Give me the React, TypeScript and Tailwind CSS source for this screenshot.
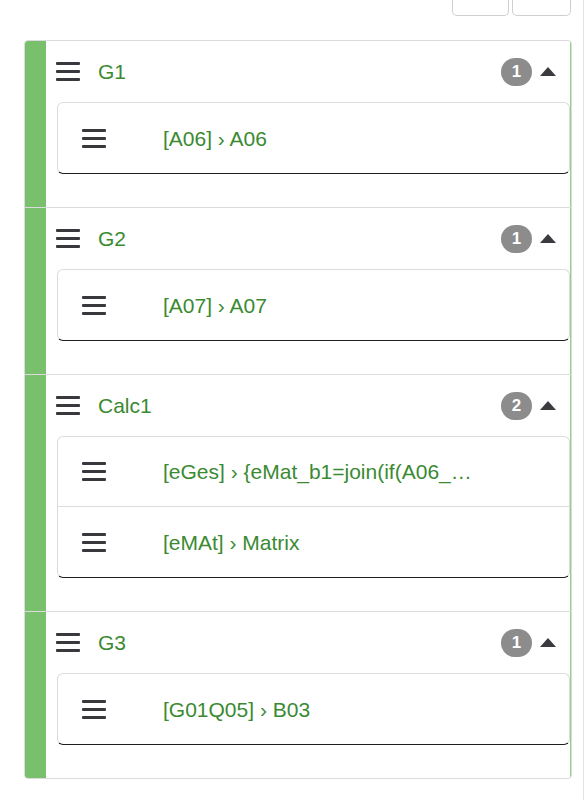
import React from "react";

const Burger = () => (
  <div className="flex flex-col gap-[5px] w-[24px] shrink-0">
    <div className="h-[3px] w-[24px] bg-[#38383d] rounded-[1px]" />
    <div className="h-[3px] w-[24px] bg-[#38383d] rounded-[1px]" />
    <div className="h-[3px] w-[24px] bg-[#38383d] rounded-[1px]" />
  </div>
);

const Caret = () => (
  <svg width="16" height="9" viewBox="0 0 16 9" className="shrink-0">
    <polygon points="0,9 8,0 16,9" fill="#3a3a3f" />
  </svg>
);

type Group = { name: string; items: string[] };

const groups: Group[] = [
  { name: "G1", items: ["[A06] › A06"] },
  { name: "G2", items: ["[A07] › A07"] },
  { name: "Calc1", items: ["[eGes] › {eMat_b1=join(if(A06_…", "[eMAt] › Matrix"] },
  { name: "G3", items: ["[G01Q05] › B03"] },
];

export default function App() {
  return (
    <div
      className="w-[584px] min-h-[800px] bg-white border-r border-[#e4e4e4]"
      style={{ fontFamily: '"Liberation Sans", Arial, sans-serif' }}
    >
      <div className="flex justify-end gap-[3px] pr-[12px]">
        <div className="h-[16px] w-[57px] border border-t-0 border-[#cfcfcf] rounded-b-[5px]" />
        <div className="h-[16px] w-[59px] border border-t-0 border-[#cfcfcf] rounded-b-[5px]" />
      </div>
      <div className="mt-[24px] ml-[24px] w-[548px] border border-[#dcdcdc] rounded-[4px] overflow-hidden">
        {groups.map((g, gi) => (
          <div
            key={g.name}
            className={`flex ${gi > 0 ? "border-t border-[#dcdcdc]" : ""}`}
          >
            <div className="w-[21px] shrink-0 bg-[#78c06c]" />
            <div className="flex-1 border-r border-[#8fd486] pb-[33px]">
              <div className="h-[61px] flex items-center pl-[10px] pr-[14px]">
                <Burger />
                <span className="ml-[18px] text-[21px] text-[#3a8a32] leading-none">
                  {g.name}
                </span>
                <div className="ml-auto flex items-center gap-[8px]">
                  <div className="w-[31px] h-[28px] rounded-full bg-[#8c8c8c] flex items-center justify-center text-white font-bold text-[17px] leading-none">
                    {g.items.length}
                  </div>
                  <Caret />
                </div>
              </div>
              <div className="ml-[11px] border border-[#dcdcdc] border-b-[#1f1f23] rounded-[6px] bg-white">
                {g.items.map((it, ii) => (
                  <div
                    key={ii}
                    className={`h-[70px] flex items-center pl-[24px] ${
                      ii < g.items.length - 1 ? "border-b border-[#dcdcdc]" : ""
                    }`}
                  >
                    <Burger />
                    <span className="ml-[57px] text-[21px] text-[#3a8a32] leading-none whitespace-nowrap">
                      {it}
                    </span>
                  </div>
                ))}
              </div>
            </div>
          </div>
        ))}
      </div>
    </div>
  );
}
